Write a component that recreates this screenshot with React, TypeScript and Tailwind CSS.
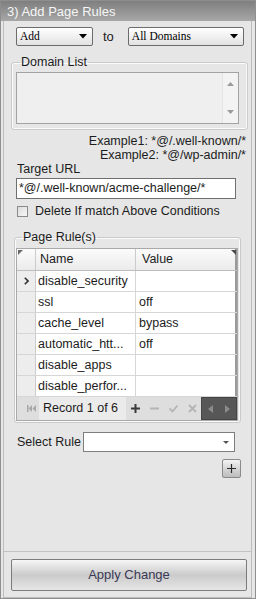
import React from "react";

const Tri = ({ className = "" }: { className?: string }) => (
  <svg width="8" height="5" viewBox="0 0 8 5" className={className}>
    <path d="M0 0H8L4 4.5Z" fill="currentColor" />
  </svg>
);

function FakeSelect({ w, label }: { w: string; label: string }) {
  return (
    <div
      className={`${w} h-[19px] flex items-center justify-between border border-[#6c6c6c] rounded-[2px] bg-gradient-to-b from-white to-[#e2e2e2] pl-[3px] pr-[5px] font-['Liberation_Serif',serif] text-[11.5px] text-black`}
    >
      <span className="leading-none">{label}</span>
      <Tri className="text-black" />
    </div>
  );
}

const rows: [string, string][] = [
  ["disable_security", ""],
  ["ssl", "off"],
  ["cache_level", "bypass"],
  ["automatic_htt...", "off"],
  ["disable_apps", ""],
  ["disable_perfor...", ""],
];

export default function App() {
  return (
    <div className="w-[256px] h-[599px] flex flex-col bg-[#e6e6e6] border border-[#8e8e8e] font-['Liberation_Sans',Arial,sans-serif] text-[12.5px] text-[#1c1c1c] overflow-hidden">
      {/* title */}
      <div className="h-[20px] shrink-0 flex items-center pl-[6px] bg-gradient-to-b from-[#7f7f7f] to-[#a7a7a7] text-[#f6f6f6] text-[13px] leading-none">
        3) Add Page Rules
      </div>

      <div className="flex-1 flex flex-col ml-[2px] mr-[3px] border-x border-b border-[#bdbdbd]">
        {/* body */}
        <div className="flex-1 flex flex-col items-start">
          <div className="mt-[6px] ml-[12px] flex items-center">
            <FakeSelect w="w-[77px]" label="Add" />
            <span className="ml-[10px] mr-[14px] text-[13px] leading-none">to</span>
            <FakeSelect w="w-[116px]" label="All Domains" />
          </div>

          {/* Domain list */}
          <fieldset className="mt-[9px] ml-[7px] w-[237px] border border-[#cacaca] rounded-[3px] shadow-[inset_0_0_0_1px_#fbfbfb] pb-[5px]">
            <legend className="ml-[8px] px-[1px] leading-[14px]">Domain List</legend>
            <div className="mt-[3px] ml-[4px] w-[223px] h-[52px] border border-[#a3a3a3] bg-[#efefef] flex justify-end">
              <div className="w-[16px] h-full bg-[#f3f3f3] border-l border-[#e2e2e2] flex flex-col items-center justify-between py-[9px]">
                <svg width="7" height="4" viewBox="0 0 7 4"><path d="M0 4H7L3.5 0Z" fill="#9a9a9a" /></svg>
                <svg width="7" height="4" viewBox="0 0 7 4"><path d="M0 0H7L3.5 4Z" fill="#9a9a9a" /></svg>
              </div>
            </div>
          </fieldset>

          <div className="self-stretch mt-[4px] pr-[5px] text-right leading-[14px]">
            <div>Example1: *@/.well-known/*</div>
            <div>Example2: *@/wp-admin/*</div>
          </div>

          <div className="ml-[13px] leading-[14px]">Target URL</div>
          <div className="mt-[2px] ml-[12px] w-[220px] h-[21px] border border-[#6f6f6f] bg-white flex items-center pl-[2px] leading-none">
            *@/.well-known/acme-challenge/*
          </div>

          <div className="mt-[6px] ml-[13px] h-[12px] flex items-center">
            <div className="w-[11px] h-[11px] border border-[#8a8a8a] bg-gradient-to-br from-[#dcdcdc] to-[#f8f8f8]" />
            <span className="ml-[7px] leading-none">Delete If match Above Conditions</span>
          </div>

          {/* Page rules */}
          <fieldset className="mt-[13px] ml-[10px] w-[227px] border border-[#cacaca] rounded-[3px] shadow-[inset_0_0_0_1px_#fbfbfb] pb-[1px]">
            <legend className="ml-[7px] px-[1px] leading-[14px]">Page Rule(s)</legend>
            <div className="mt-[4px] ml-[1px] w-[222px] border border-[#a9a9a9] bg-white flex flex-col">
              {/* header */}
              <div className="relative h-[22px] flex border-b border-[#bdbdbd] bg-gradient-to-b from-[#fbfbfb] to-[#ebebeb]">
                <svg className="absolute left-[1px] top-[1px]" width="5" height="5" viewBox="0 0 5 5"><path d="M0 0H5L0 5Z" fill="#6a6a6a" /></svg>
                <svg className="absolute right-[1px] top-[1px]" width="5" height="5" viewBox="0 0 5 5"><path d="M0 0H5V5Z" fill="#4a4a4a" /></svg>
                <div className="w-[19px] border-r border-[#cbcbcb]" />
                <div className="w-[100px] border-r border-[#cbcbcb] flex items-center pl-[4px]">Name</div>
                <div className="flex-1 flex items-center pl-[6px] border-r-2 border-[#9a9a9a]">Value</div>
              </div>
              {rows.map(([n, v], i) => (
                <div key={i} className="h-[21px] flex border-b border-[#d6d6d6]">
                  <div className="w-[19px] border-r border-[#cbcbcb] bg-[#ededed] flex items-center justify-center">
                    {i === 0 && (
                      <svg width="5" height="8" viewBox="0 0 5 8"><path d="M0.8 0.8L4 4L0.8 7.2" stroke="#333" strokeWidth="1.6" fill="none" /></svg>
                    )}
                  </div>
                  <div className="w-[100px] border-r border-[#d6d6d6] flex items-center pl-[2px] whitespace-nowrap overflow-hidden">{n}</div>
                  <div className="flex-1 flex items-center pl-[3px] border-r-2 border-[#9a9a9a]">{v}</div>
                </div>
              ))}
              {/* navigator */}
              <div className="h-[23px] flex items-stretch bg-[#dedede]">
                <div className="w-[21px] flex items-center justify-end pr-[2px]">
                  <svg width="9" height="7" viewBox="0 0 9 7">
                    <rect x="0" y="0" width="1.5" height="7" fill="#a8a8a8" />
                    <path d="M5 0V7L1.5 3.5Z" fill="#a8a8a8" />
                    <path d="M9 0V7L5.5 3.5Z" fill="#a8a8a8" />
                  </svg>
                </div>
                <div className="w-[87px] ml-[1px] bg-[#ebebeb] flex items-center pl-[4px] text-[12.5px] whitespace-nowrap">Record 1 of 6</div>
                <div className="flex items-center ml-[5px] gap-[10px]">
                  <svg width="9" height="9" viewBox="0 0 9 9"><path d="M4.5 0V9M0 4.5H9" stroke="#3a3a3a" strokeWidth="2" /></svg>
                  <svg width="9" height="9" viewBox="0 0 9 9"><path d="M0 4.5H9" stroke="#b5b5b5" strokeWidth="2" /></svg>
                  <svg width="9" height="9" viewBox="0 0 9 9"><path d="M0.5 4.5L3.5 7.5L8.5 1.5" stroke="#b5b5b5" strokeWidth="1.8" fill="none" /></svg>
                  <svg width="9" height="9" viewBox="0 0 9 9"><path d="M1 1L8 8M8 1L1 8" stroke="#b5b5b5" strokeWidth="1.8" /></svg>
                </div>
                <div className="ml-auto w-[36px] bg-[#575757] border border-[#454545] flex items-center justify-around">
                  <svg width="5" height="8" viewBox="0 0 5 8"><path d="M5 0V8L0 4Z" fill="#8c8c8c" /></svg>
                  <svg width="5" height="8" viewBox="0 0 5 8"><path d="M0 0V8L5 4Z" fill="#8c8c8c" /></svg>
                </div>
              </div>
            </div>
          </fieldset>

          <div className="mt-[9px] ml-[13px] flex items-center">
            <span className="w-[66px] leading-none">Select Rule</span>
            <div className="w-[152px] h-[20px] border border-[#7e7e7e] bg-white flex items-center justify-end pr-[5px]">
              <svg width="6" height="3" viewBox="0 0 6 3"><path d="M0 0H6L3 3Z" fill="#555" /></svg>
            </div>
          </div>

          <div className="mt-[7px] ml-[218px] w-[19px] h-[19px] border border-[#8a8a8a] rounded-[2px] bg-gradient-to-b from-[#f4f4f4] via-[#d6d6d6] to-[#bdbdbd] flex items-center justify-center">
            <svg width="9" height="9" viewBox="0 0 9 9"><path d="M4.5 0V9M0 4.5H9" stroke="#2a2a2a" strokeWidth="1.2" /></svg>
          </div>
        </div>

        {/* footer */}
        <div className="h-[46px] shrink-0 border-t border-[#c2c2c2] pt-[7px]">
          <div className="ml-[7px] w-[236px] h-[32px] border border-[#7c7c7c] rounded-[2px] bg-gradient-to-b from-[#f6f6f6] via-[#cbcbcb] to-[#e6e6e6] flex items-center justify-center text-[13px] text-[#3a3a55]">
            Apply Change
          </div>
        </div>
      </div>
    </div>
  );
}
